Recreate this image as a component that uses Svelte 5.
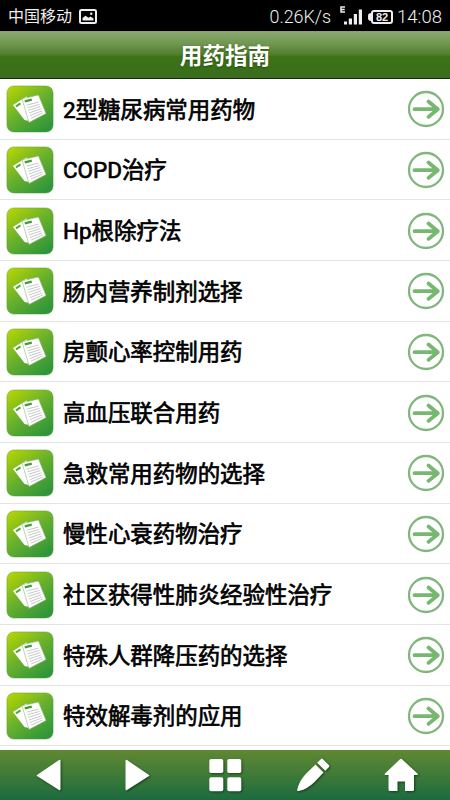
<script>
  const items = [
    '2型糖尿病常用药物',
    'COPD治疗',
    'Hp根除疗法',
    '肠内营养制剂选择',
    '房颤心率控制用药',
    '高血压联合用药',
    '急救常用药物的选择',
    '慢性心衰药物治疗',
    '社区获得性肺炎经验性治疗',
    '特殊人群降压药的选择',
    '特效解毒剂的应用'
  ];
</script>

<div class="screen">
  <div class="status">
    <span class="carrier">中国移动</span>
    <svg class="picture" width="18" height="15" viewBox="0 0 18 15">
      <rect x="1" y="1" width="16" height="13" rx="1.5" fill="none" stroke="#eee" stroke-width="2" />
      <path d="M3.5 11.5V9l3-2.200 3 2 2-1.300 3 2v2z" fill="#eee" />
      <circle cx="12.2" cy="4.8" r="1.2" fill="#eee" />
    </svg>
    <span class="speed">0.26K/s</span>
    <svg class="signal" width="24" height="20" viewBox="0 0 24 20">
      <path d="M6 1H2v5h4M2 3.500h3.700" fill="none" stroke="#eee" stroke-width="1.5" />
      <path d="M5 15.500h3v3H5zM9.800 12.500h3.200v6H9.800zM14.800 8h3.200v10.500h-3.200zM19.800 3.500H23v15h-3.200z" fill="#eee" />
    </svg>
    <span class="battery"><i></i><b>82</b></span>
    <span class="clock">14:08</span>
  </div>

  <header><h1>用药指南</h1></header>

  <svg class="defs" width="0" height="0">
    <defs>
      <linearGradient id="tile" x1="0" y1="0" x2="0.75" y2="1">
        <stop offset="0" stop-color="#bcd800" />
        <stop offset="0.5" stop-color="#6cb22b" />
        <stop offset="1" stop-color="#30963a" />
      </linearGradient>
    </defs>
  </svg>

  <ul>
    {#each items as item}
      <li>
        <svg class="doc" width="48" height="48" viewBox="0 0 48 48">
          <rect x="0.9" y="0.9" width="46.200" height="46.200" rx="7" fill="url(#tile)" stroke="#4f9a35" stroke-opacity="0.55" stroke-width="0.8" />
          <path d="M7 20 20.500 11.500 32 29l-9 7-4.500-1z" fill="#fff" />
          <path d="M10 21.300l4.500-2.900" stroke="#57a53d" stroke-width="2" />
          <path d="M16 13.800 32.500 10 40 28.500 23 37.500z" fill="#fff" stroke="#8fb57c" stroke-width="0.600" />
          <path d="M18.800 16.300l7-1.700" stroke="#459a3c" stroke-width="2.400" />
          <path d="M20.500 20.200l12-3.100M21.500 22.800l12-3.400M22.200 25.400l12.200-3.900M23 28l12.400-4.300M24 30.600l12.300-4.800M24.800 33.200l11.700-5.200" stroke="#bfc2c1" stroke-width="0.900" />
        </svg>
        <span class="label">{item}</span>
        <svg class="arrow" width="38" height="38" viewBox="0 0 38 38">
          <circle cx="19" cy="19" r="17" fill="none" stroke="#82b67e" stroke-width="2.300" />
          <path d="M7.500 19.200h23M21.500 11.500l9.300 7.700-9.300 7.700" fill="none" stroke="#77b870" stroke-width="3.800" stroke-linecap="round" stroke-linejoin="round" />
        </svg>
      </li>
    {/each}
  </ul>

  <nav>
    <svg viewBox="0 0 40 40"><path d="M8 20 30 5q1.500-.7 1.500 1v28q0 1.700-1.500 1L8 21q-.8-.5 0-1z" /></svg>
    <svg viewBox="0 0 40 40"><path d="M32 20 10 5q-1.500-.7-1.500 1v28q0 1.700 1.500 1L32 21q.8-.5 0-1z" /></svg>
    <svg viewBox="0 0 40 40">
      <rect x="4.300" y="4" width="14" height="14" rx="1.800" /><rect x="22.300" y="4" width="14" height="14" rx="1.800" />
      <rect x="4.300" y="22.300" width="14" height="14" rx="1.800" /><rect x="22.300" y="22.300" width="14" height="14" rx="1.800" />
    </svg>
    <svg viewBox="0 0 40 40">
      <path d="M28 3.900q.8-.9 1.700 0l6.300 6.300q.8.800 0 1.700l-3.700 3.900-8.100-8z" />
      <path d="M22.500 9.500l8 8-9 9.500Q14 34.500 5.500 36q-1.700.2-1.300-1.300Q6 26 13 18.800z" />
    </svg>
    <svg viewBox="0 0 40 40"><path d="M19 4.200q1-.9 2 0l15.500 14.300q1 1.500-.8 1.500H33v14.500q0 1.500-1.500 1.500H24v-9.500h-7.500V36H9q-1.500 0-1.500-1.500V20H4.800q-1.800 0-.8-1.500z" /></svg>
  </nav>
</div>

<style>
  :global(body) { margin: 0; background: #fff; }
  .screen {
    width: 450px;
    height: 800px;
    display: flex;
    flex-direction: column;
    overflow: hidden;
    background: #fff;
    font-family: Roboto, "Noto Sans CJK SC", sans-serif;
  }
  .status {
    height: 31px;
    box-sizing: border-box;
    flex: none;
    display: flex;
    align-items: center;
    padding: 2px 8px 0;
    background: #000;
    color: #eee;
    white-space: nowrap;
  }
  .carrier { font-size: 16px; line-height: 28px; width: 64px; }
  .picture { margin-left: 7px; margin-top: -1px; }
  .speed { margin-left: auto; font-size: 17.900px; font-weight: 300; }
  .signal { margin-left: 8px; margin-top: -2px; }
  .battery { display: flex; align-items: center; margin-left: 5px; margin-top: 1px; }
  .battery i { width: 3px; height: 8px; background: #eee; border-radius: 3px 0 0 3px; }
  .battery b {
    box-sizing: border-box;
    width: 22px;
    height: 14px;
    border: 2px solid #eee;
    border-radius: 3px;
    font: bold 11px/10px "Liberation Sans", sans-serif;
    text-align: center;
  }
  .clock { margin-left: 4px; width: 45px; font-size: 18.500px; font-weight: 300; }
  header {
    flex: none;
    height: 48px;
    box-sizing: border-box;
    display: flex;
    align-items: center;
    justify-content: center;
    padding-top: 3px;
    border-top: 1px solid #8c9c7c;
    border-bottom: 1px solid #142c08;
    background: linear-gradient(#8aa96d, #709751 25%, #507f2c 49%, #3e7216 54%, #39701a 80%, #3c6d22);
  }
  h1 {
    margin: 0;
    color: #fff;
    font-size: 22.600px;
    line-height: 32px;
    font-weight: 700;
    text-shadow: 0 1px 2px #234a0c;
  }
  .defs { position: absolute; }
  ul { flex: 1; min-height: 0; margin: 0; padding: 0; list-style: none; }
  li {
    height: 60.660px;
    box-sizing: border-box;
    display: flex;
    align-items: center;
    padding: 1px 5px 0 5.500px;
    border-bottom: 1px solid #e4e4e4;
  }
  .doc { flex: none; }
  .label {
    flex: 1;
    margin-left: 9.500px;
    padding-top: 1px;
    color: #000;
    font-size: 22.450px;
    line-height: 32px;
    white-space: nowrap;
    -webkit-text-stroke: 0.700px #000;
  }
  .arrow { flex: none; }
  nav {
    flex: none;
    height: 50px;
    box-sizing: border-box;
    display: flex;
    align-items: center;
    justify-content: space-between;
    padding: 0 29px;
    background: linear-gradient(#608832, #3f7a38 50%, #1b6b40);
  }
  nav svg { width: 40px; height: 40px; fill: #fff; filter: drop-shadow(1px 1px 1px rgba(0, 30, 0, 0.6)); }
</style>
